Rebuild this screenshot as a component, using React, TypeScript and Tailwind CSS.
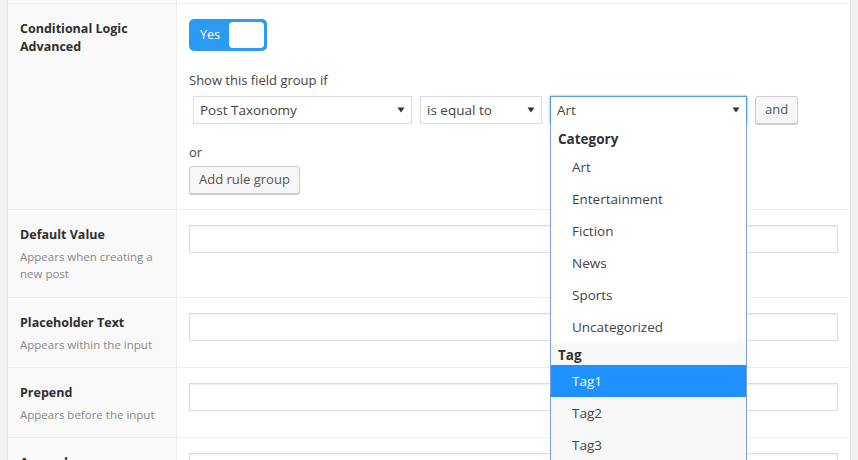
const font = "font-['Open_Sans',sans-serif]";

interface FieldRow {
  title: string;
  desc: string[];
}

const rows: FieldRow[] = [
  { title: "Default Value", desc: ["Appears when creating a", "new post"] },
  { title: "Placeholder Text", desc: ["Appears within the input"] },
  { title: "Prepend", desc: ["Appears before the input"] },
  { title: "Append", desc: ["Appears after the input"] },
];

const categories = ["Art", "Entertainment", "Fiction", "News", "Sports", "Uncategorized"];

function Arrow() {
  return (
    <svg width="8" height="6" viewBox="0 0 8 6" className="shrink-0">
      <path d="M0.5 0.5 H7.5 L4 5.5 Z" fill="#333" />
    </svg>
  );
}

function Select({ label, width, focus }: { label: string; width: string; focus?: boolean }) {
  return (
    <div
      className={`${width} h-[28px] flex items-center justify-between pl-[6px] pr-[6px] bg-white border ${
        focus ? "border-[#5b9dd9] shadow-[0_0_2px_rgba(30,140,190,0.8)]" : "border-[#ddd]"
      }`}
    >
      <span className="text-[13.5px] text-[#444]">{label}</span>
      <Arrow />
    </div>
  );
}

function Button({ children }: { children: string }) {
  return (
    <button className="h-[28px] px-[9px] rounded-[3px] border border-[#ccc] bg-[#f7f7f7] text-[13px] text-[#555] shadow-[0_1px_0_#ccc]">
      {children}
    </button>
  );
}

function TextInput() {
  return <div className="h-[28px] w-[649px] bg-white border border-[#ddd] shadow-[inset_0_1px_2px_rgba(0,0,0,0.07)]" />;
}

function Dropdown() {
  return (
    <div className="absolute left-0 top-[27px] w-[197px] h-[360px] bg-white border border-t-0 border-[#7aa0dc] overflow-hidden z-10">
      <div className="h-[28px] pl-[7px] pt-[7px] text-[13.5px] font-bold text-[#333] leading-[18px]">Category</div>
      {categories.map((c) => (
        <div key={c} className="h-[32px] pl-[21px] flex items-center text-[13.5px] text-[#444]">
          {c}
        </div>
      ))}
      <div className="bg-[#f8f8f8]">
        <div className="h-[22px] pl-[7px] pt-[3px] text-[13.5px] font-bold text-[#333] leading-[18px]">Tag</div>
        <div className="h-[32px] pl-[21px] flex items-center text-[13.5px] text-white bg-[#1e90ff]">Tag1</div>
        {["Tag2", "Tag3", "Tag4"].map((t) => (
          <div key={t} className="h-[32px] pl-[21px] flex items-center text-[13.5px] text-[#444]">
            {t}
          </div>
        ))}
      </div>
    </div>
  );
}

function Label({ title, desc }: FieldRow) {
  return (
    <div
      className={`w-[169px] shrink-0 bg-[#f9f9f9] border-r border-[#eee] pl-[12px] pr-[8px] pt-[16px] ${
        desc.length > 1 ? "pb-[15px]" : "pb-[14px]"
      }`}
    >
      <div className="text-[12.5px] font-bold text-[#2f2f2f] leading-[18px]">{title}</div>
      <div className="mt-[4px] text-[11.5px] text-[#888] leading-[17px]">
        {desc.map((d) => (
          <div key={d}>{d}</div>
        ))}
      </div>
    </div>
  );
}

export default function App() {
  return (
    <div className={`w-[858px] h-[460px] overflow-hidden bg-[#f1f1f1] px-[7px] ${font}`}>
      <div className="bg-white border-x border-[#e5e5e5]">
        <div className="flex h-[4px] border-b border-[#eee]">
          <div className="w-[169px] bg-[#f9f9f9] border-r border-[#eee]" />
        </div>

        <div className="flex border-b border-[#eee]">
          <div className="w-[169px] shrink-0 bg-[#f9f9f9] border-r border-[#eee] pl-[12px] pt-[16px]">
            <div className="text-[12.5px] font-bold text-[#2f2f2f] leading-[18px]">
              Conditional Logic
              <br />
              Advanced
            </div>
          </div>
          <div className="flex-1 pl-[12px] pt-[15px] pb-[15px]">
            <div className="w-[78px] h-[32px] rounded-[5px] bg-[#2b9af3] flex items-center justify-between pl-[11px] pr-[3px]">
              <span className="text-[12.5px] text-white">Yes</span>
              <div className="w-[35px] h-[26px] rounded-[4px] bg-white" />
            </div>
            <div className="mt-[20px] text-[13px] text-[#444] leading-[18px]">Show this field group if</div>
            <div className="mt-[7px] ml-[4px] flex items-center gap-[8px]">
              <Select label="Post Taxonomy" width="w-[219px]" />
              <Select label="is equal to" width="w-[122px]" />
              <div className="relative">
                <Select label="Art" width="w-[197px]" focus />
                <Dropdown />
              </div>
              <Button>and</Button>
            </div>
            <div className="mt-[19px] text-[13px] text-[#444] leading-[18px]">or</div>
            <div className="mt-[5px]">
              <Button>Add rule group</Button>
            </div>
          </div>
        </div>

        {rows.map((r) => (
          <div key={r.title} className="flex border-b border-[#eee]">
            <Label {...r} />
            <div className="flex-1 pl-[12px] pt-[15px]">
              <TextInput />
            </div>
          </div>
        ))}
      </div>
    </div>
  );
}
